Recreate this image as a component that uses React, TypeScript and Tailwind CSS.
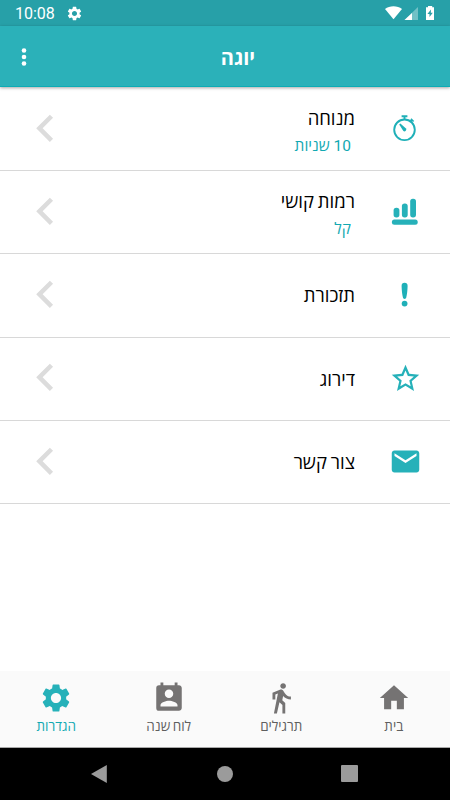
import type { ReactNode } from "react";
import {
  MdChevronLeft,
  MdDirectionsWalk,
  MdEmail,
  MdHome,
  MdPermContactCalendar,
  MdSettings,
  MdStarBorder
} from "react-icons/md";

type SettingItem = {
  label: string;
  value?: string;
  icon: ReactNode;
};

function StopwatchIcon() {
  return (
    <svg width="28" height="28" viewBox="0 0 28 28" fill="none" stroke="#1fb0b8" aria-hidden="true">
      <circle cx="13.5" cy="14.8" r="10.3" strokeWidth="1.9" />
      <path d="M10.6 1.2h5.8M13.5 1.2v3.6" strokeWidth="1.9" />
      <path d="M19.4 6.4l1.8-1.8M19.9 3.9l2.7 2.6" strokeWidth="1.7" />
      <path d="M8.2 9.4l1.2-.9 5.3 4.7a1.8 1.8 0 0 1-2.5 2.6z" fill="#1fb0b8" stroke="none" />
    </svg>
  );
}

function LevelsIcon() {
  return (
    <svg width="28" height="28" viewBox="0 0 28 28" fill="#26b1b9" aria-hidden="true">
      <rect x="2.6" y="9.8" width="5.8" height="9.6" rx="2.7" />
      <rect x="10.9" y="5.4" width="5.8" height="14" rx="2.7" />
      <rect x="19.2" y="0.8" width="5.8" height="18.6" rx="2.7" />
      <rect x="0.9" y="21.5" width="25.8" height="5.3" rx="2.5" />
    </svg>
  );
}

function ExclamationIcon() {
  return (
    <svg width="28" height="28" viewBox="0 0 28 28" fill="#1fb0b8" aria-hidden="true">
      <path d="M10.6 5C10.5 3 11.7 1.8 13.6 1.8s3.1 1.2 3 3.2c-.1 4.5-.6 8.6-1.4 11.8-.3 1.5-2.9 1.5-3.2 0C11.2 13.6 10.7 9.5 10.6 5z" />
      <circle cx="13.6" cy="22.6" r="2.9" />
    </svg>
  );
}

const settings: SettingItem[] = [
  { label: "מנוחה", value: "10 שניות", icon: <StopwatchIcon /> },
  { label: "רמות קושי", value: "קל", icon: <LevelsIcon /> },
  { label: "תזכורת", icon: <ExclamationIcon /> },
  { label: "דירוג", icon: <MdStarBorder size={33} /> },
  { label: "צור קשר", icon: <MdEmail size={33} /> }
];

const tabs = [
  { label: "בית", Icon: MdHome, active: false },
  { label: "תרגילים", Icon: MdDirectionsWalk, active: false },
  { label: "לוח שנה", Icon: MdPermContactCalendar, active: false },
  { label: "הגדרות", Icon: MdSettings, active: true }
];

function StatusBar() {
  return (
    <div dir="ltr" className="flex h-[26px] items-center bg-[#27a0a8] px-[15px] text-white">
      <span className="pt-[2px] font-['Roboto',sans-serif] text-[16px] leading-none">10:08</span>
      <MdSettings size={17} className="ml-[11px]" />
      <svg width="50" height="16" viewBox="0 0 50 16" className="ml-auto" aria-hidden="true">
        <path d="M0 4C4.5.2 12.5.2 17 4L8.5 14.2z" fill="#fff" />
        <path d="M33 2v13H19.5z" fill="#fff" fillOpacity=".35" />
        <path d="M27 8v7h-7.5z" fill="#fff" />
        <path d="M43 2.2V1h4.2v1.2H49V15h-8V2.2z" fill="#fff" />
        <path d="M46 4.5l-3.600 4.400h2.100V12l3.300-4.300h-2z" fill="#27a0a8" />
      </svg>
    </div>
  );
}

function Header() {
  return (
    <header
      dir="ltr"
      className="relative grid h-[61px] grid-cols-[48px_1fr_22px] items-center border-b border-[#0cacb5] bg-[#2bb1b9] text-white shadow-[0_1px_3px_rgba(0,0,0,0.35)]"
    >
      <button type="button" aria-label="תפריט" className="flex justify-center pt-[2px]">
        <svg width="6" height="20" viewBox="0 0 6 20" fill="currentColor" aria-hidden="true">
          <circle cx="3" cy="3.5" r="2.3" />
          <circle cx="3" cy="10" r="2.3" />
          <circle cx="3" cy="16.5" r="2.3" />
        </svg>
      </button>
      <h1 className="pt-1 text-center text-[20px] leading-6 font-bold">יוגה</h1>
    </header>
  );
}

function SettingRow({ label, value, icon }: SettingItem) {
  return (
    <li className="flex items-center border-b border-[#d8d8d8]">
      <span className="flex w-[90px] justify-center text-[#26b1b9]">{icon}</span>
      <div className={value ? "flex-1 pt-[6px] pr-[5px]" : "flex-1 pr-[5px]"}>
        <p className="text-[18.5px] leading-7 text-black [word-spacing:-1px]">{label}</p>
        {value ? (
          <p className="pr-[4px] font-['Roboto','Open_Sans',sans-serif] text-[15.5px] leading-7 text-[#12a9b2]">{value}</p>
        ) : null}
      </div>
      <MdChevronLeft size={54.6} className="mb-[2px] ml-[17.5px] text-[#dcdcdc]" />
    </li>
  );
}

export default function App() {
  return (
    <div dir="rtl" className="flex h-[800px] w-[450px] flex-col overflow-hidden bg-white font-['Open_Sans','Noto_Sans',sans-serif]">
      <StatusBar />
      <Header />

      <main className="flex-1 pt-px">
        <ul className="grid h-[416px] grid-rows-5">
          {settings.map((item) => (
            <SettingRow key={item.label} {...item} />
          ))}
        </ul>
      </main>

      <nav className="grid h-[77px] grid-cols-4 border-b border-[#a8a8a8] bg-[#fafafa]">
        {tabs.map(({ label, Icon, active }) => (
          <a
            key={label}
            href="#"
            className={`flex flex-col items-center pt-[10px] ${active ? "text-[#26b1b9]" : "text-[#757373]"}`}
          >
            <Icon size={34} />
            <span className={`mt-px text-[13.5px] leading-5 [word-spacing:-1px] ${active ? "text-[#12a9b2]" : "text-[#5f5f5f]"}`}>
              {label}
            </span>
          </a>
        ))}
      </nav>

      <div dir="ltr" className="flex h-[52px] items-center justify-between bg-black pr-[92px] pb-px pl-[91px]">
        <svg width="16" height="18" viewBox="0 0 16 18" fill="#9b9b9b" aria-hidden="true">
          <path d="M15.8 0v18L0 9z" />
        </svg>
        <span className="ml-px size-4 rounded-full bg-[#9b9b9b]" />
        <span className="size-[17px] rounded-[1px] bg-[#9b9b9b]" />
      </div>
    </div>
  );
}
